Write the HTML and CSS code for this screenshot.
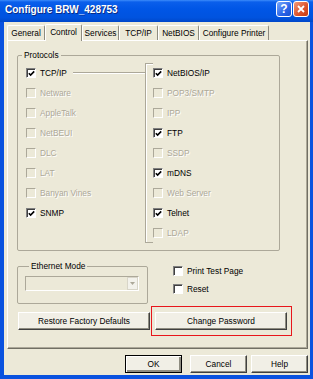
FILE: index.html
```html
<!DOCTYPE html>
<html lang="en">
<head>
    <meta charset="UTF-8">
    <meta name="viewport" content="width=device-width, initial-scale=1.0">
    <title>Configure BRW_428753</title>

    <link rel="stylesheet" href="styles.css">
</head>
<body>

    <div class="window">
        <!-- Title bar -->
        <div class="titlebar">
            <span class="title">Configure BRW_428753</span>
            <div class="caption-btns">
                <span class="cap-btn help">?</span>
                <span class="cap-btn close">
                    <svg width="8" height="8" viewBox="0 0 8 8"><path d="M1 1L7 7M7 1L1 7" stroke="#fff" stroke-width="1.8" fill="none"/></svg>
                </span>
            </div>
        </div>

        <div class="frame">
            <div class="client">
                <!-- Tabs -->
                <div class="tabs">
                    <div class="tab w-general">General</div>
                    <div class="tab active w-control">Control</div>
                    <div class="tab w-services">Services</div>
                    <div class="tab w-tcpip">TCP/IP</div>
                    <div class="tab w-netbios">NetBIOS</div>
                    <div class="tab w-printer">Configure Printer</div>
                </div>

                <div class="panel">
                    <fieldset class="group protocols">
                        <legend>Protocols</legend>
                        <div class="proto-cols">
                            <div class="col-left">
                                <div class="check-row"><span class="box"><svg width="7" height="7" viewBox="0 0 7 7"><path d="M0.8 3.2L2.6 5L6.2 1.4" stroke="#000" stroke-width="1.6" fill="none"/></svg></span><span class="lbl">TCP/IP</span><span class="connector"></span></div>
                                <div class="check-row off"><span class="box"></span><span class="lbl">Netware</span></div>
                                <div class="check-row off"><span class="box"></span><span class="lbl">AppleTalk</span></div>
                                <div class="check-row off"><span class="box"></span><span class="lbl">NetBEUI</span></div>
                                <div class="check-row off"><span class="box"></span><span class="lbl">DLC</span></div>
                                <div class="check-row off"><span class="box"></span><span class="lbl">LAT</span></div>
                                <div class="check-row off"><span class="box"></span><span class="lbl">Banyan Vines</span></div>
                                <div class="check-row"><span class="box"><svg width="7" height="7" viewBox="0 0 7 7"><path d="M0.8 3.2L2.6 5L6.2 1.4" stroke="#000" stroke-width="1.6" fill="none"/></svg></span><span class="lbl">SNMP</span></div>
                            </div>
                            <div class="col-right">
                                <div class="bracket"></div>
                                <div class="check-row"><span class="box"><svg width="7" height="7" viewBox="0 0 7 7"><path d="M0.8 3.2L2.6 5L6.2 1.4" stroke="#000" stroke-width="1.6" fill="none"/></svg></span><span class="lbl">NetBIOS/IP</span></div>
                                <div class="check-row off"><span class="box"></span><span class="lbl">POP3/SMTP</span></div>
                                <div class="check-row off"><span class="box"></span><span class="lbl">IPP</span></div>
                                <div class="check-row"><span class="box"><svg width="7" height="7" viewBox="0 0 7 7"><path d="M0.8 3.2L2.6 5L6.2 1.4" stroke="#000" stroke-width="1.6" fill="none"/></svg></span><span class="lbl">FTP</span></div>
                                <div class="check-row off"><span class="box"></span><span class="lbl">SSDP</span></div>
                                <div class="check-row"><span class="box"><svg width="7" height="7" viewBox="0 0 7 7"><path d="M0.8 3.2L2.6 5L6.2 1.4" stroke="#000" stroke-width="1.6" fill="none"/></svg></span><span class="lbl">mDNS</span></div>
                                <div class="check-row off"><span class="box"></span><span class="lbl">Web Server</span></div>
                                <div class="check-row"><span class="box"><svg width="7" height="7" viewBox="0 0 7 7"><path d="M0.8 3.2L2.6 5L6.2 1.4" stroke="#000" stroke-width="1.6" fill="none"/></svg></span><span class="lbl">Telnet</span></div>
                                <div class="check-row off"><span class="box"></span><span class="lbl">LDAP</span></div>
                            </div>
                        </div>
                    </fieldset>

                    <div class="mid-row">
                        <fieldset class="group ethernet">
                            <legend>Ethernet Mode</legend>
                            <div class="combo">
                                <span class="combo-btn">
                                    <svg width="5" height="3" viewBox="0 0 5 3"><path d="M0 0H5L2.5 3Z" fill="#ACA899"/></svg>
                                </span>
                            </div>
                        </fieldset>
                        <div class="options">
                            <div class="opt-row"><span class="box"></span><span class="lbl">Print Test Page</span></div>
                            <div class="opt-row"><span class="box"></span><span class="lbl">Reset</span></div>
                        </div>
                    </div>

                    <div class="btn-row">
                        <button class="btn wide">Restore Factory Defaults</button>
                        <div class="highlight">
                            <button class="btn wide">Change Password</button>
                        </div>
                    </div>
                </div>

                <!-- Dialog buttons -->
                <div class="footer">
                    <button class="btn small default">OK</button>
                    <button class="btn small">Cancel</button>
                    <button class="btn small">Help</button>
                </div>
            </div>
        </div>
    </div>

</body>
</html>
```

FILE: styles.css
```css
* {
    margin: 0;
    padding: 0;
    box-sizing: border-box;
}

body {
    width: 313px;
    height: 379px;
    overflow: hidden;
    font-family: "Liberation Sans", Arial, sans-serif;
    font-size: 8.3px;
    color: #000;
}

.window {
    width: 313px;
    height: 379px;
    display: flex;
    flex-direction: column;
    background: #0A52DF;
}

/* Title bar */
.titlebar {
    height: 22px;
    display: flex;
    justify-content: space-between;
    align-items: flex-start;
    padding: 1px 4px 0 5px;
    background: linear-gradient(#3C8CFA 0, #0A5FEB 2px, #0056E6 40%, #0053DF 80%, #0047C9 100%);
}

.title {
    color: #fff;
    font-weight: bold;
    font-size: 10px;
    line-height: 17px;
    text-shadow: 1px 1px 0 #0B2C85;
}

.caption-btns {
    display: flex;
    gap: 1px;
}

.cap-btn {
    width: 16px;
    height: 16px;
    border: 1px solid #fff;
    border-radius: 3px;
    display: flex;
    align-items: center;
    justify-content: center;
    color: #fff;
    font-weight: bold;
    font-size: 12px;
}

.help {
    background: linear-gradient(135deg, #7AAAFB, #2A64E8 60%, #1A4FD0);
}

.close {
    background: linear-gradient(135deg, #F29A7A, #DE5630 55%, #C23A10);
}

/* Frame and client area */
.frame {
    flex: 1;
    display: flex;
    padding: 0 3px 4px 4px;
}

.client {
    flex: 1;
    display: flex;
    flex-direction: column;
    padding: 2px 2px 0 3px;
    background: #ECE9D8;
}

/* Tabs */
.tabs {
    display: flex;
    align-items: flex-start;
    height: 17px;
    margin-bottom: -1px;
}

.tab {
    height: 15px;
    margin-top: 1px;
    line-height: 14px;
    text-align: center;
    border-top: 1px solid #fff;
    border-left: 1px solid #fff;
    border-right: 1px solid #8E8C80;
    border-radius: 2px 2px 0 0;
    background: #ECE9D8;
}

.tab.active {
    position: relative;
    z-index: 1;
    height: 17px;
    margin-top: 0;
    line-height: 15px;
}

.w-general { width: 38px; }
.w-control { width: 37px; }
.w-services { width: 37px; }
.w-tcpip { width: 39px; }
.w-netbios { width: 41px; }
.w-printer { width: 70px; }

/* Tab page */
.panel {
    width: 301px;
    height: 309px;
    display: flex;
    flex-direction: column;
    padding: 9px 0 0 9px;
    border: 1px solid;
    border-color: #fff #716F64 #716F64 #fff;
    box-shadow: inset -1px -1px 0 #ACA899;
}

.group {
    border: 1px solid #ACA899;
    border-radius: 2px;
}

.group legend {
    margin-left: 4px;
    padding: 0 2px;
    line-height: 10px;
}

.protocols {
    width: 263px;
    height: 201px;
}

.proto-cols {
    display: flex;
    padding-top: 3px;
}

.col-left {
    width: 127px;
    padding-left: 8px;
}

.col-right {
    display: grid;
    grid-template-columns: 8px auto;
    grid-auto-rows: 20px;
}

.bracket {
    grid-column: 1;
    grid-row: 1 / span 9;
    border: 1px solid #ACA899;
    border-right: none;
    box-shadow: inset 1px 1px 0 #fff;
}

.col-right .check-row {
    grid-column: 2;
}

.check-row, .opt-row {
    display: flex;
    align-items: center;
    height: 20px;
}

.opt-row {
    height: 18px;
}

.box {
    width: 10px;
    height: 10px;
    flex-shrink: 0;
    display: flex;
    align-items: center;
    justify-content: center;
    background: #fff;
    border: 1px solid;
    border-color: #808080 #fff #fff #808080;
    box-shadow: inset 1px 1px 0 #404040;
}

.lbl {
    margin-left: 4px;
    white-space: nowrap;
}

.off .box {
    background: #ECE9D8;
    border-color: #ACA899 #fff #fff #ACA899;
    box-shadow: none;
}

.off .lbl {
    color: #ACA899;
    text-shadow: 1px 1px 0 #fff;
}

.connector {
    flex: 1;
    height: 2px;
    margin-left: 6px;
    border-top: 1px solid #ACA899;
    border-bottom: 1px solid #fff;
}

/* Ethernet mode and options */
.mid-row {
    display: flex;
    margin-top: 10px;
}

.ethernet {
    width: 131px;
    height: 43px;
    padding: 5px 0 0 7px;
}

.combo {
    width: 114px;
    height: 15px;
    display: flex;
    justify-content: flex-end;
    border: 1px solid;
    border-color: #ACA899 #fff #fff #ACA899;
    background: #ECE9D8;
}

.combo-btn {
    width: 11px;
    display: flex;
    align-items: center;
    justify-content: center;
    border: 1px solid #D8D5C8;
    background: #F3F2EC;
}

.options {
    margin-left: 25px;
    padding-top: 1px;
}

/* Buttons */
.btn {
    height: 18px;
    font-family: inherit;
    font-size: 8.3px;
    color: #000;
    background: #F1EFE6;
    border: 1px solid;
    border-color: #fff #404040 #404040 #fff;
    box-shadow: inset -1px -1px 0 #8E8C80;
}

.btn.wide {
    width: 132px;
}

.btn.small {
    width: 57px;
}

.btn.default {
    border-color: #000;
    box-shadow: inset 1px 1px 0 #fff, inset -2px -2px 0 #8E8C80;
}

.btn-row {
    display: flex;
    align-items: center;
    margin: 2px 0 0 1px;
    gap: 1px;
}

.highlight {
    border: 1px solid #E8161B;
    padding: 5px 4px 5px 3px;
}

.footer {
    display: flex;
    justify-content: flex-end;
    margin-top: 6px;
}

.footer .btn + .btn {
    margin-left: 4px;
}

.footer .default {
    margin-right: 4px;
}
```
